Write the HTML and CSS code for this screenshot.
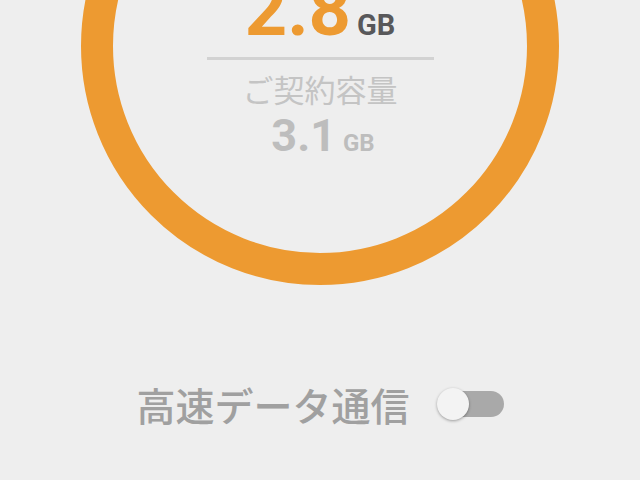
FILE: index.html
```html
<!DOCTYPE html>
<html lang="ja">
  <head>
    <meta charset="UTF-8" />
    <meta name="viewport" content="width=device-width, initial-scale=1.0" />
    <title>データ残量</title>
    <link rel="stylesheet" href="styles.css">
  </head>
  <body>
    <!-- 残量メーター -->
    <div class="gauge">
      <div class="gauge-body">
        <div class="amount used">
          <span class="num">2.8</span>
          <span class="unit">GB</span>
        </div>
        <div class="divider"></div>
        <div class="label">ご契約容量</div>
        <div class="amount total">
          <span class="num">3.1</span>
          <span class="unit">GB</span>
        </div>
      </div>
    </div>

    <!-- 高速データ通信 -->
    <div class="setting">
      <span class="setting-name">高速データ通信</span>
      <div class="switch">
        <div class="track"></div>
        <div class="thumb"></div>
      </div>
    </div>
  </body>
</html>
```

FILE: styles.css
```css
body {
  margin: 0;
  background-color: #eeeeee;
  font-family: Roboto, "Noto Sans CJK JP", sans-serif;
  overflow: hidden;
}

.gauge {
  box-sizing: border-box;
  width: 478px;
  height: 478px;
  margin: -193px auto 0;
  border: 32px solid #ed9a31;
  border-radius: 50%;
}
.gauge-body {
  display: flex;
  flex-direction: column;
  align-items: center;
  padding-top: 134px;
}

.amount {
  display: flex;
  align-items: baseline;
  justify-content: center;
  font-weight: bold;
}
.used .num {
  font-size: 74px;
  line-height: 74px;
  color: #ed9a31;
}
.used .unit {
  margin-left: 6px;
  font-size: 29px;
  color: #58585a;
}
.total {
  margin-top: 6px;
  margin-left: 6px;
}
.total .num {
  font-size: 45px;
  line-height: 45px;
  color: #bdbdbd;
}
.total .unit {
  margin-left: 7px;
  font-size: 24px;
  color: #bdbdbd;
}

.divider {
  width: 227px;
  height: 3px;
  margin-top: 10px;
  background-color: #d2d2d2;
}
.label {
  margin-top: 11px;
  font-family: "Noto Sans CJK JP", sans-serif;
  font-size: 31px;
  line-height: 36px;
  color: #c4c4c4;
}

/* スイッチ行 */
.setting {
  display: flex;
  align-items: center;
  justify-content: center;
  margin-top: 97px;
}
.setting-name {
  font-family: "Noto Sans CJK JP", sans-serif;
  font-size: 39px;
  font-weight: 500;
  line-height: 44px;
  color: #a0a0a0;
}
.switch {
  position: relative;
  width: 67px;
  height: 34px;
  margin-left: 27px;
}
.track {
  position: absolute;
  left: 12px;
  right: 0;
  top: 4px;
  height: 26px;
  border-radius: 13px;
  background-color: #a9a9a9;
}
.thumb {
  position: absolute;
  left: 0;
  top: 1px;
  width: 32px;
  height: 32px;
  border-radius: 50%;
  background-color: #f3f3f3;
  box-shadow: 0 1px 3px rgba(0, 0, 0, 0.35);
}
```
